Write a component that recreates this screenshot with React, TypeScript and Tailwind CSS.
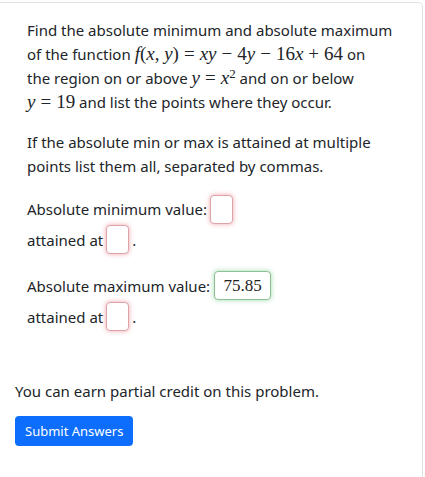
import React from "react";

const sans = { fontFamily: '"Noto Sans", "Open Sans", Arial, sans-serif' };

function V({ children }: { children: React.ReactNode }) {
  return <span className="italic">{children}</span>;
}

function Op({ children }: { children: React.ReactNode }) {
  return <span className="mx-[5px]">{children}</span>;
}

function M({ children }: { children: React.ReactNode }) {
  return (
    <span
      className="whitespace-nowrap text-[19px] leading-[10px]"
      style={{ fontFamily: '"Liberation Serif", "DejaVu Serif", serif' }}
    >
      {children}
    </span>
  );
}

function Box({ ok, value }: { ok?: boolean; value?: string }) {
  return (
    <span
      className={
        "inline-flex items-center justify-center h-[29px] rounded-[4px] border bg-white " +
        (ok
          ? "min-w-[57px] px-[8px] border-[#8cc291] shadow-[0_0_5px_rgba(40,167,69,0.45)]"
          : "w-[23px] border-[#dea3a8] shadow-[0_0_5px_rgba(220,53,69,0.45)]")
      }
    >
      {value ? (
        <span className="text-[17px] text-[#222]" style={{ fontFamily: '"Liberation Serif", serif' }}>
          {value}
        </span>
      ) : null}
    </span>
  );
}

export default function App() {
  return (
    <div className="h-[477px] w-[425px] overflow-hidden bg-white text-[#212529]" style={sans}>
      <div className="mt-[2px] mr-[2px] h-[500px] border-t border-r border-[#dfe2e5] rounded-tr-[5px]">
        <div className="pl-[27px] pt-[15px] text-[15px] leading-[24px]">
          <p className="mb-[16px]">
            Find the absolute minimum and absolute maximum
            <br />
            of the function{" "}
            <M>
              <V>f</V>(<V>x</V>, <V>y</V>)<Op>=</Op>
              <V>xy</V>
              <Op>−</Op>4<V>y</V>
              <Op>−</Op>16<V>x</V>
              <Op>+</Op>64
            </M>{" "}
            on
            <br />
            the region on or above{" "}
            <M>
              <V>y</V>
              <Op>=</Op>
              <V>x</V>
              <sup className="text-[13px]">2</sup>
            </M>{" "}
            and on or below
            <br />
            <M>
              <V>y</V>
              <Op>=</Op>19
            </M>{" "}
            and list the points where they occur.
          </p>
          <p className="mb-[16px]">
            If the absolute min or max is attained at multiple
            <br />
            points list them all, separated by commas.
          </p>
          <div className="flex flex-col">
            <div className="flex items-center h-[30px] gap-[3px]">
              <span>Absolute minimum value:</span>
              <Box />
            </div>
            <div className="flex items-center h-[31px] gap-[3px]">
              <span>attained at</span>
              <Box />
              <span>.</span>
            </div>
            <div className="flex items-center h-[31px] gap-[4px] mt-[15px]">
              <span>Absolute maximum value:</span>
              <Box ok value="75.85" />
            </div>
            <div className="flex items-center h-[31px] gap-[3px]">
              <span>attained at</span>
              <Box />
              <span>.</span>
            </div>
          </div>
        </div>
        <div className="pl-[15px] pt-[47px] text-[15px] leading-[24px]">
          <p>You can earn partial credit on this problem.</p>
          <button className="mt-[13px] h-[30px] px-[10px] rounded-[4px] bg-[#0d6efd] text-white text-[13px]">
            Submit Answers
          </button>
        </div>
      </div>
    </div>
  );
}
